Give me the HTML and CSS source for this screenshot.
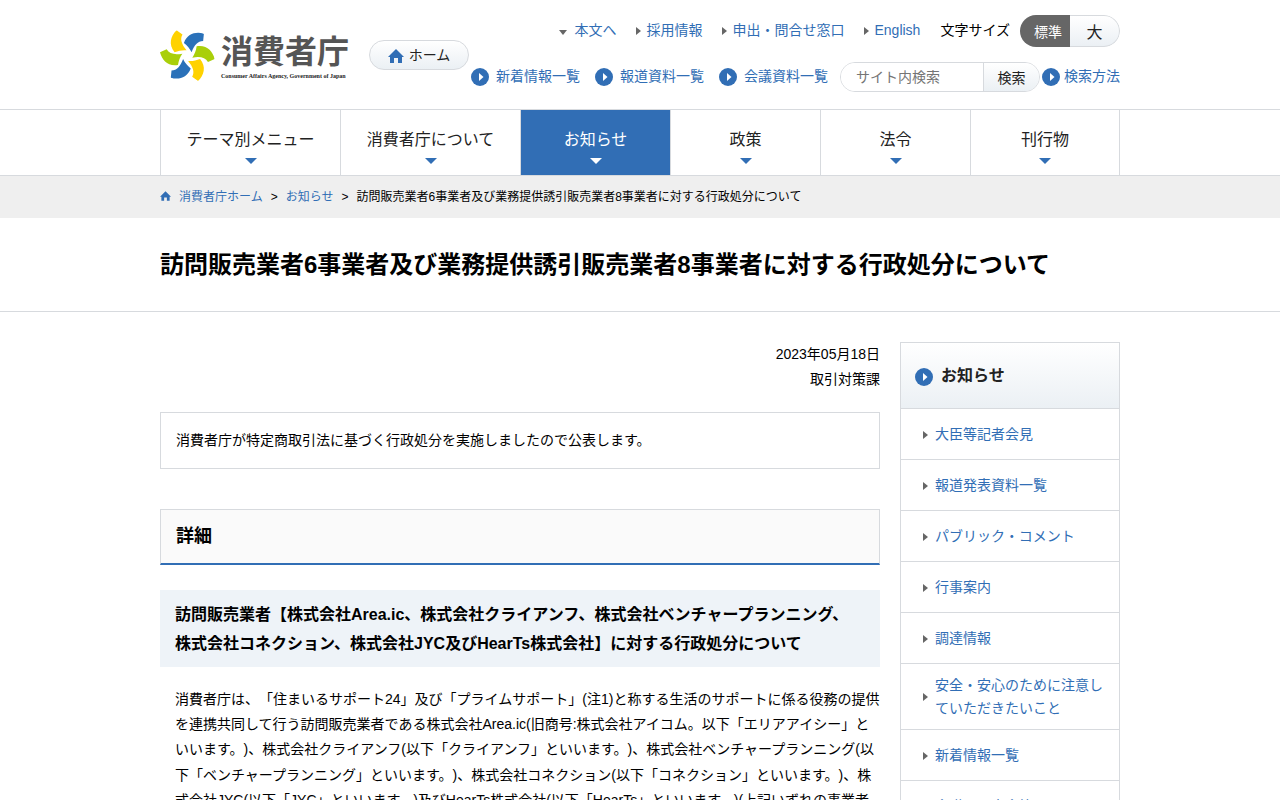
FILE: index.html
```html
<!DOCTYPE html>
<html lang="ja">
<head>
    <meta charset="UTF-8">
    <meta name="viewport" content="width=device-width, initial-scale=1.0">
    <title>訪問販売業者6事業者及び業務提供誘引販売業者8事業者に対する行政処分について | 消費者庁</title>
    <link rel="stylesheet" href="styles.css">
</head>
<body>
    <!-- 共通アイコン -->
    <svg class="sprite" aria-hidden="true">
        <symbol id="icon-circle" viewBox="0 0 18 18">
            <circle cx="9" cy="9" r="9" fill="#316eb5"/>
            <path d="M8 5 L12.5 9 L8 13 Z" fill="#fff"/>
        </symbol>
        <symbol id="icon-home" viewBox="0 0 16 14">
            <path d="M8 0 L16 8 H14 V14 H10 V9 H6 V14 H2 V8 H0 Z" fill="#316eb5"/>
        </symbol>
        <symbol id="logo-arm" viewBox="0 0 168 156">
            <path d="M0 67 L20 58 C28 72 44 75 67 71 C60 81 56 92 54 105 C24 110 6 91 0 67 Z"/>
        </symbol>
    </svg>

    <header>
        <div class="container header-inner">
            <a href="#" class="logo">
                <svg class="logo-mark" viewBox="0 0 168 156" aria-hidden="true">
                    <g fill="#a9cf0a">
                        <use href="#logo-arm" width="168" height="156"/>
                        <use href="#logo-arm" width="168" height="156" transform="rotate(180 82 77)"/>
                    </g>
                    <g fill="#ffd200">
                        <use href="#logo-arm" width="168" height="156" transform="rotate(60 82 77)"/>
                        <use href="#logo-arm" width="168" height="156" transform="rotate(240 82 77)"/>
                    </g>
                    <g fill="#2a71b9">
                        <use href="#logo-arm" width="168" height="156" transform="rotate(120 82 77)"/>
                        <use href="#logo-arm" width="168" height="156" transform="rotate(300 82 77)"/>
                    </g>
                </svg>
                <span class="logo-text">
                    <span class="logo-name">消費者庁</span>
                    <span class="logo-en">Consumer Affairs Agency, Government of Japan</span>
                </span>
            </a>
            <a href="#" class="home-button">
                <svg class="home-icon"><use href="#icon-home"/></svg>ホーム
            </a>
            <div class="header-menu">
                <div class="header-row">
                    <a href="#main" class="arrow-link arrow-down">本文へ</a>
                    <a href="#" class="arrow-link">採用情報</a>
                    <a href="#" class="arrow-link">申出・問合せ窓口</a>
                    <a href="#" class="arrow-link">English</a>
                    <div class="font-size">
                        <span>文字サイズ</span>
                        <div class="size-buttons">
                            <button type="button" class="active">標準</button>
                            <button type="button" class="large">大</button>
                        </div>
                    </div>
                </div>
                <div class="header-row header-row-sub">
                    <a href="#" class="circle-link"><svg><use href="#icon-circle"/></svg>新着情報一覧</a>
                    <a href="#" class="circle-link"><svg><use href="#icon-circle"/></svg>報道資料一覧</a>
                    <a href="#" class="circle-link"><svg><use href="#icon-circle"/></svg>会議資料一覧</a>
                    <div class="search-area">
                        <form class="search">
                            <input type="text" placeholder="サイト内検索" aria-label="サイト内検索">
                            <button type="submit">検索</button>
                        </form>
                        <a href="#" class="circle-link search-help"><svg><use href="#icon-circle"/></svg>検索方法</a>
                    </div>
                </div>
            </div>
        </div>
    </header>

    <nav class="global-nav" aria-label="メインメニュー">
        <ul class="container">
            <li class="wide"><a href="#">テーマ別メニュー</a></li>
            <li class="wide"><a href="#">消費者庁について</a></li>
            <li><a href="#" class="current">お知らせ</a></li>
            <li><a href="#">政策</a></li>
            <li><a href="#">法令</a></li>
            <li><a href="#">刊行物</a></li>
        </ul>
    </nav>

    <div class="breadcrumb">
        <ol class="container">
            <li><a href="#"><svg><use href="#icon-home"/></svg>消費者庁ホーム</a></li>
            <li><a href="#">お知らせ</a></li>
            <li>訪問販売業者6事業者及び業務提供誘引販売業者8事業者に対する行政処分について</li>
        </ol>
    </div>

    <div class="page-title">
        <h1 class="container">訪問販売業者6事業者及び業務提供誘引販売業者8事業者に対する行政処分について</h1>
    </div>

    <div class="container content">
        <main id="main">
            <p class="date">2023年05月18日<br>取引対策課</p>
            <p class="lead">消費者庁が特定商取引法に基づく行政処分を実施しましたので公表します。</p>
            <h2>詳細</h2>
            <h3>訪問販売業者【株式会社Area.ic、株式会社クライアンフ、株式会社ベンチャープランニング、株式会社コネクション、株式会社JYC及びHearTs株式会社】に対する行政処分について</h3>
            <p class="text">消費者庁は、「住まいるサポート24」及び「プライムサポート」(注1)と称する生活のサポートに係る役務の提供を連携共同して行う訪問販売業者である株式会社Area.ic(旧商号:株式会社アイコム。以下「エリアアイシー」といいます。)、株式会社クライアンフ(以下「クライアンフ」といいます。)、株式会社ベンチャープランニング(以下「ベンチャープランニング」といいます。)、株式会社コネクション(以下「コネクション」といいます。)、株式会社JYC(以下「JYC」といいます。)及びHearTs株式会社(以下「HearTs」といいます。)(上記いずれの事業者</p>
        </main>
        <aside class="side-menu">
            <h2><a href="#"><svg><use href="#icon-circle"/></svg>お知らせ</a></h2>
            <ul>
                <li><a href="#">大臣等記者会見</a></li>
                <li><a href="#">報道発表資料一覧</a></li>
                <li><a href="#">パブリック・コメント</a></li>
                <li><a href="#">行事案内</a></li>
                <li><a href="#">調達情報</a></li>
                <li><a href="#">安全・安心のために注意していただきたいこと</a></li>
                <li><a href="#">新着情報一覧</a></li>
                <li><a href="#">会議・研究会等</a></li>
            </ul>
        </aside>
    </div>
</body>
</html>
```
FILE: styles.css
```css
:root {
    --main-blue: #316eb5;
    --border-color: #d7dade;
    --arrow-color: #666;
    --button-gradient: linear-gradient(#fff, #ebf0f4);
}
* {
    box-sizing: border-box;
}
body {
    font-family: "Liberation Sans", "Noto Sans CJK JP", sans-serif;
    font-size: 14px;
    line-height: 1.8;
    text-spacing-trim: space-all;
    color: #000;
    background-color: #fff;
    margin: 0;
}
h1, h2, h3, p, ul, ol {
    margin: 0;
    padding: 0;
}
ul, ol {
    list-style: none;
}
a {
    color: var(--main-blue);
    text-decoration: none;
}
a:hover {
    text-decoration: underline;
}
button, input {
    font-family: inherit;
    font-size: 14px;
}
.sprite {
    display: none;
}
.container {
    width: 100%;
    max-width: 960px;
    margin: 0 auto;
}

/* ヘッダー */
.header-inner {
    display: flex;
    align-items: flex-start;
    padding: 15px 0 17px;
}
.logo {
    display: flex;
    align-items: flex-start;
    gap: 5px;
    margin-top: 15px;
    color: #555;
}
.logo:hover {
    text-decoration: none;
}
.logo-mark {
    width: 56px;
    height: 52px;
}
.logo-text {
    display: flex;
    flex-direction: column;
    padding-top: 2px;
    white-space: nowrap;
}
.logo-name {
    font-size: 32px;
    font-weight: bold;
    line-height: 40px;
}
.logo-en {
    font-family: "Liberation Serif", serif;
    font-size: 6px;
    font-weight: bold;
    line-height: 8px;
    color: #222;
}
.home-button {
    display: flex;
    align-items: center;
    justify-content: center;
    gap: 5px;
    width: 100px;
    height: 30px;
    margin: 25px 0 0 20px;
    padding-top: 2px;
    border: 1px solid var(--border-color);
    border-radius: 15px;
    background: var(--button-gradient);
    color: #222;
}
.home-icon {
    width: 16px;
    height: 14px;
}
.header-menu {
    margin-left: auto;
}
.header-row {
    display: flex;
    align-items: center;
    justify-content: flex-end;
    gap: 20px;
    white-space: nowrap;
}
.header-row-sub {
    gap: 15px;
    margin-top: 15px;
}
.arrow-link::before {
    content: "";
    display: inline-block;
    margin-right: 5px;
    border-left: 5px solid var(--arrow-color);
    border-top: 4px solid transparent;
    border-bottom: 4px solid transparent;
}
.arrow-down::before {
    margin-right: 7px;
    border-top: 5px solid var(--arrow-color);
    border-left: 4px solid transparent;
    border-right: 4px solid transparent;
    border-bottom: 0;
}
.font-size {
    display: flex;
    align-items: center;
    gap: 10px;
}
.size-buttons {
    display: flex;
    width: 100px;
    height: 32px;
    border-radius: 16px;
    overflow: hidden;
}
.size-buttons button {
    width: 50%;
    padding: 0;
    border: 1px solid var(--border-color);
    border-left: 0;
    border-radius: 0 16px 16px 0;
    background: var(--button-gradient);
    color: #222;
    cursor: pointer;
}
.size-buttons .active {
    padding-left: 6px;
    border: 0;
    border-radius: 0;
    background: #666;
    color: #fff;
}
.size-buttons .large {
    font-size: 16px;
}
.circle-link {
    display: flex;
    align-items: center;
    gap: 7px;
}
.circle-link svg, .side-menu svg {
    width: 18px;
    height: 18px;
    flex: none;
}
.search-area {
    display: flex;
    align-items: center;
    gap: 2px;
}
.search-help {
    gap: 4px;
}
.header-row-sub .search-area {
    margin-left: -3px;
}
.search {
    display: flex;
    width: 200px;
    height: 30px;
    border: 1px solid var(--border-color);
    border-radius: 15px;
    overflow: hidden;
}
.search input {
    flex: 1;
    min-width: 0;
    padding: 0 15px;
    border: 0;
    outline: 0;
    background: #fff;
}
.search input::placeholder {
    color: #757575;
}
.search button {
    width: 56px;
    padding: 0;
    border: 0;
    border-left: 1px solid var(--border-color);
    background: var(--button-gradient);
    color: #222;
    cursor: pointer;
}

/* グローバルナビ */
.global-nav {
    border-top: 1px solid var(--border-color);
    border-bottom: 1px solid var(--border-color);
}
.global-nav ul {
    display: flex;
}
.global-nav li {
    flex: 1 1 150px;
    border-left: 1px solid var(--border-color);
}
.global-nav .wide {
    flex-basis: 180px;
}
.global-nav li:last-child {
    border-right: 1px solid var(--border-color);
}
.global-nav a {
    display: flex;
    flex-direction: column;
    align-items: center;
    gap: 4px;
    padding: 15px 0 11px;
    font-size: 16px;
    line-height: 29px;
    color: #222;
}
.global-nav a::after {
    content: "";
    border-top: 6px solid var(--main-blue);
    border-left: 6px solid transparent;
    border-right: 6px solid transparent;
}
.global-nav .current {
    background-color: var(--main-blue);
    color: #fff;
}
.global-nav .current::after {
    border-top-color: #fff;
}

/* パンくず */
.breadcrumb {
    padding: 10px 0;
    background-color: #efefef;
    font-size: 12px;
    line-height: 22px;
}
.breadcrumb ol {
    display: flex;
}
.breadcrumb li + li::before {
    content: ">";
    margin: 0 8px;
}
.breadcrumb svg {
    width: 11px;
    height: 10px;
    margin-right: 8px;
}

.page-title {
    padding: 25px 0;
    border-bottom: 1px solid var(--border-color);
}
.page-title h1 {
    font-size: 24px;
    line-height: 43px;
}

/* 本文 */
.content {
    display: flex;
    align-items: flex-start;
    gap: 20px;
    padding: 30px 0;
}
main {
    flex: 1;
    min-width: 0;
}
.date {
    margin-bottom: 20px;
    line-height: 25px;
    text-align: right;
}
.lead {
    margin-bottom: 40px;
    padding: 15px;
    border: 1px solid var(--border-color);
    line-height: 25px;
}
main h2 {
    margin-bottom: 25px;
    padding: 10px 15px;
    border: 1px solid var(--border-color);
    border-bottom: 2px solid var(--main-blue);
    background-color: #fafafa;
    font-size: 18px;
    line-height: 33px;
}
main h3 {
    margin-bottom: 20px;
    padding: 10px 20px 9px 15px;
    background-color: #eef3f8;
    font-size: 16px;
    line-height: 29px;
}
.text {
    padding-left: 15px;
}

/* サイドメニュー */
.side-menu {
    width: 220px;
    border: 1px solid var(--border-color);
}
.side-menu h2 {
    font-size: 16px;
    background: var(--button-gradient);
}
.side-menu h2 a {
    display: flex;
    align-items: center;
    gap: 8px;
    height: 65px;
    padding: 2px 14px 0;
    color: #222;
}
.side-menu li {
    border-top: 1px solid var(--border-color);
}
.side-menu li a {
    display: flex;
    align-items: center;
    gap: 7px;
    min-height: 50px;
    padding: 10px 15px 9px 22px;
    line-height: 23px;
}
.side-menu li a::before {
    content: "";
    flex: none;
    border-left: 5px solid var(--arrow-color);
    border-top: 4px solid transparent;
    border-bottom: 4px solid transparent;
}
```
